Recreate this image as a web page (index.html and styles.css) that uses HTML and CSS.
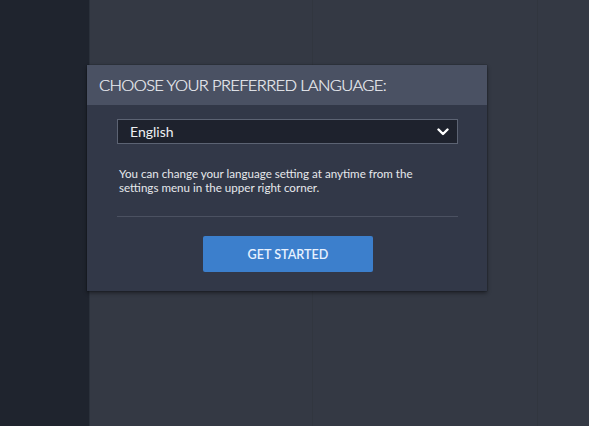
FILE: index.html
```html
<!DOCTYPE html>
<html lang="en">
<head>
<meta charset="utf-8">
<title>Choose language</title>
<link rel="stylesheet" href="styles.css">
</head>
<body>
<div class="app">
  <aside class="sidebar"></aside>
  <main class="main">
    <div class="col"></div>
    <div class="col"></div>
    <div class="col"></div>
  </main>
  <section class="modal">
    <header class="modal-head">CHOOSE YOUR PREFERRED LANGUAGE:</header>
    <div class="modal-body">
      <div class="select">
        <span>English</span>
        <svg class="chev" width="12" height="8" viewBox="0 0 12 8"><polyline points="1.5,1.5 6,6 10.5,1.5" fill="none" stroke="#ffffff" stroke-width="2.4" stroke-linecap="round" stroke-linejoin="round"/></svg>
      </div>
      <p class="note">You can change your language setting at anytime from the<br>settings menu in the upper right corner.</p>
      <hr class="divider">
      <div class="actions"><button class="btn">GET STARTED</button></div>
    </div>
  </section>
</div>
</body>
</html>
```
FILE: styles.css
```css
html, body {
  margin: 0;
  padding: 0;
  width: 589px;
  height: 426px;
  overflow: hidden;
  font-family: Lato, "Open Sans", sans-serif;
}
.app {
  display: flex;
  width: 589px;
  height: 426px;
  position: relative;
  background: #343a45;
}
.sidebar {
  width: 89px;
  flex: none;
  background: #1f242e;
  border-right: 1px solid #2b313b;
}
.main {
  flex: 1;
  display: grid;
  grid-template-columns: 223px 225px 1fr;
  background: #343944;
}
.col {
  border-right: 1px solid #31363f;
}
.col:last-child { border-right: none; }
.modal {
  position: absolute;
  left: 87px;
  top: 65px;
  width: 400px;
  height: 226px;
  background: #323848;
  box-shadow: 0 2px 4px rgba(0,0,0,0.45), 0 0 1px rgba(0,0,0,0.6);
  display: flex;
  flex-direction: column;
}
.modal-head {
  height: 40px;
  background: #4a5163;
  color: #eef0f4;
  font-size: 16.5px;
  font-weight: 300;
  padding-left: 12px;
  display: flex;
  align-items: center;
  letter-spacing: -0.65px;
  -webkit-text-stroke: 0.2px #eef0f4;
}
.modal-body {
  padding: 14px 29px 0 30px;
}
.select {
  height: 23px;
  border: 1px solid #5c6373;
  background: #1e222d;
  display: flex;
  align-items: center;
  justify-content: space-between;
  padding: 0 8px 0 12px;
  color: #eef0f3;
  font-size: 14px;
}
.chev { display: block; margin-top: 1px; }
.note {
  margin: 23px 0 0 2px;
  color: #e6e8ec;
  font-size: 11.6px;
  line-height: 14px;
}
.divider {
  margin: 21px 0 0 0;
  border: none;
  border-top: 1px solid #4b5161;
  height: 0;
}
.actions {
  display: flex;
  justify-content: center;
  padding-top: 19px;
}
.btn {
  width: 170px;
  height: 36px;
  border: none;
  border-radius: 2px;
  background: #3c7fcc;
  color: #e7f1ff;
  font-family: Lato, "Open Sans", sans-serif;
  font-size: 12.6px;
  font-weight: 600;
  letter-spacing: 0;
  margin-left: 1px;
}
```
